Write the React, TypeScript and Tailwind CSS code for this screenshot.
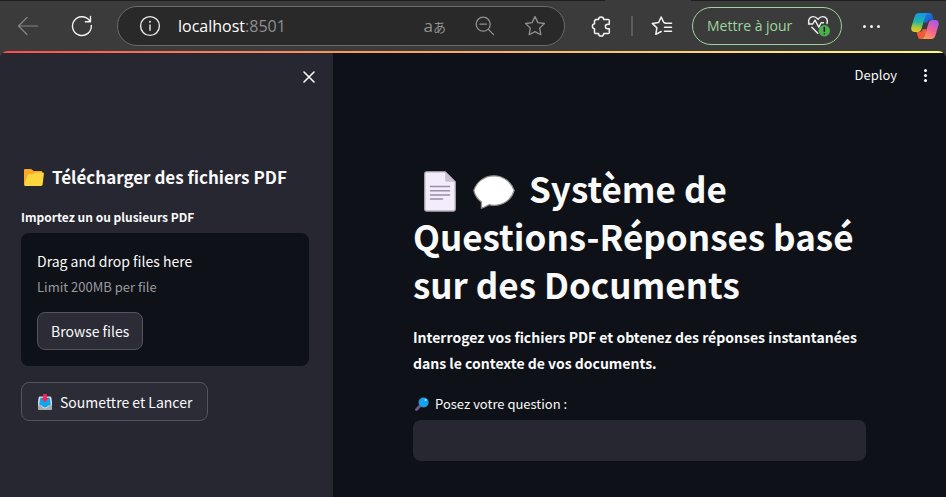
import React from "react";

const uiFont = "font-['Noto_Sans_CJK_JP','Noto_Sans_CJK_SC',sans-serif]";
const chromeFont = "font-['Open_Sans','Noto_Sans_CJK_JP',sans-serif]";

function BackIcon() {
  return (
    <svg width="22" height="20" viewBox="0 0 22 20" fill="none" stroke="#858585" strokeWidth="1.2" strokeLinecap="round" strokeLinejoin="round">
      <path d="M20.5 10H1.5M10 1.5L1.5 10l8.5 8.5" />
    </svg>
  );
}

function ReloadIcon() {
  return (
    <svg width="22" height="22" viewBox="0 0 22 22" fill="none" stroke="#f2f2f2" strokeWidth="1.4" strokeLinecap="round" strokeLinejoin="round">
      <path d="M20.3 10.5a9.4 9.4 0 1 1-2-5.2l1 1.2M19.5 1.5v5.2h-5.2" />
    </svg>
  );
}

function InfoIcon() {
  return (
    <svg width="22" height="22" viewBox="0 0 22 22" fill="none" stroke="#e8e8e8" strokeWidth="1.4">
      <circle cx="11" cy="11" r="9.4" />
      <path d="M11 9.6v6.2" />
      <circle cx="11" cy="6.8" r="1" fill="#e8e8e8" stroke="none" />
    </svg>
  );
}

function ZoomOutIcon() {
  return (
    <svg width="20" height="20" viewBox="0 0 20 20" fill="none" stroke="#929292" strokeWidth="1.3" strokeLinecap="round">
      <circle cx="8.2" cy="8.2" r="7" />
      <path d="M13.4 13.4l5.2 5.2M5 8.2h6.4" />
    </svg>
  );
}

function StarIcon() {
  return (
    <svg width="22" height="22" viewBox="0 0 22 22" fill="none" stroke="#929292" strokeWidth="1.3" strokeLinejoin="round">
      <path d="M11 1.6l2.9 6 6.5.9-4.7 4.6 1.1 6.6L11 16.6l-5.8 3.1 1.1-6.6L1.6 8.5l6.5-.9z" />
    </svg>
  );
}

function PuzzleIcon() {
  return (
    <svg width="20" height="22" viewBox="0 0 20 22" fill="none" stroke="#f2f2f2" strokeWidth="1.5" strokeLinejoin="round">
      <path d="M4.500 4.500h3a2.600 2.600 0 1 1 5.200 0h4.600a1 1 0 0 1 1 1v3.700h-1.600a2.300 2.300 0 0 0 0 4.600h1.600v3.700a1 1 0 0 1-1 1h-4.600a2.600 2.600 0 0 1-5.200 0h-3a1 1 0 0 1-1-1v-3.700a2.600 2.600 0 0 1 0-5.100v-2.700a1 1 0 0 1 1-1z" />
    </svg>
  );
}

function FavoritesIcon() {
  return (
    <svg width="22" height="22" viewBox="0 0 22 22" fill="none" stroke="#f2f2f2" strokeWidth="1.5" strokeLinecap="round" strokeLinejoin="round">
      <path d="M14 7.700L12.800 7.500 10.200 2 7.600 7.500l-6.300.9 4.600 4.500-1.100 6.400 5.400-2.800M14 8.200h6.500M13.500 12.200h7M13.500 16.200h7" />
    </svg>
  );
}

function HealthIcon() {
  return (
    <svg width="24" height="24" viewBox="0 0 24 24" fill="none" stroke="#f2f2f2" strokeWidth="1.4" strokeLinecap="round" strokeLinejoin="round">
      <path d="M2 9.500C.6 5.800 3 2.600 6.200 2.600c2 0 3.500 1 4.800 2.600 1.300-1.600 2.800-2.600 4.800-2.600 3.500 0 5.400 3.300 4.200 6.900" />
      <path d="M1.500 10h4.200l2.300-3.800 3.800 7 2.300-4.400h2.400M4.800 13.200l6 6" />
      <circle cx="17.300" cy="16.800" r="5.700" fill="#4caf50" stroke="none" />
      <path d="M17.300 13.500v3.800M17.300 19.700v.1" stroke="#222" strokeWidth="1.600" />
    </svg>
  );
}

function CopilotIcon() {
  return (
    <svg width="28" height="26" viewBox="0 0 28 26">
      <defs>
        <linearGradient id="cpLeft" x1="0.3" y1="0" x2="0.2" y2="1">
          <stop offset="0" stopColor="#1596e8" />
          <stop offset="0.45" stopColor="#24b6a0" />
          <stop offset="0.75" stopColor="#a8c93c" />
          <stop offset="1" stopColor="#f6c522" />
        </linearGradient>
        <linearGradient id="cpRight" x1="0.8" y1="0" x2="0.3" y2="1">
          <stop offset="0" stopColor="#9a5cf0" />
          <stop offset="0.5" stopColor="#f0609a" />
          <stop offset="1" stopColor="#ff9a50" />
        </linearGradient>
        <linearGradient id="cpTop" x1="0" y1="0" x2="1" y2="1">
          <stop offset="0" stopColor="#1a8be8" />
          <stop offset="1" stopColor="#1b4fc4" />
        </linearGradient>
      </defs>
      <path d="M10 0h8.500c1.700 0 2.400 1 2.900 2.600l1.300 4.400h-3c-2 0-3 1-3.500 2.500l-3 .5z" fill="url(#cpTop)" />
      <path d="M18 26H9.800c-1.800 0-2.500-1-3-2.600L5.500 19h2.700c2 0 3-1.200 3.500-2.700l3-.3z" fill="#ee5a3a" />
      <path d="M8 0h9c-1.700.6-2.300 1.800-2.900 3.800l-3.500 11.800c-.6 2-1.600 3.400-3.900 3.400H3.800C.8 19-.3 16.600.4 14L3.600 3.600C4.300 1.300 5.700 0 8 0z" fill="url(#cpLeft)" />
      <path d="M20 26h-9c1.700-.6 2.300-1.800 2.900-3.800l3.500-11.800c.6-2 1.600-3.400 3.900-3.400h2.900c3 0 4.100 2.400 3.400 5l-3.200 10.400c-.7 2.300-2.100 3.600-4.400 3.600z" fill="url(#cpRight)" />
    </svg>
  );
}

function FolderIcon() {
  return (
    <svg width="20" height="17" viewBox="0 0 20 17" className="shrink-0">
      <path d="M0 1.200C0 .5.500 0 1.200 0h5.300c.6 0 1 .2 1.400.6L9.500 2H17c.7 0 1.200.5 1.200 1.200V15.500H1.200C.5 15.500 0 15 0 14.300z" fill="#fba829" />
      <path d="M5 5.200h4L11 3.600h7.700c.8 0 1.300.6 1.200 1.400l-1.300 10.600c-.1.800-.7 1.400-1.500 1.400H1.400C.5 17 0 16.300.2 15.500L3.600 6.300C3.900 5.600 4.300 5.200 5 5.200z" fill="#fdd53f" />
    </svg>
  );
}

function InboxIcon() {
  return (
    <svg width="14" height="16" viewBox="0 0 14 16" className="shrink-0">
      <path d="M2.200 2.500h9.600c.8 0 1.400.4 1.600 1.200L14 8v6.600c0 .8-.6 1.400-1.400 1.400H1.400C.6 16 0 15.400 0 14.600V8l.6-4.300c.2-.8.800-1.200 1.600-1.200z" fill="#dcdee0" />
      <path d="M2.300 3.800h9.400l1 5.700v2H10c-.3 1.300-1.500 2-3 2s-2.700-.7-3-2H1.300v-2z" fill="#12a5ee" />
      <path d="M0 11.500h3.200c.6 1.900 2 2.800 3.800 2.800s3.200-.9 3.800-2.800H14v3.100c0 .8-.6 1.400-1.400 1.400H1.400C.6 16 0 15.400 0 14.600z" fill="#a9abad" />
      <path d="M5.200 0h3.600v4h2L7 8.200 3.200 4h2z" fill="#f8245f" />
    </svg>
  );
}

function PageIcon() {
  return (
    <svg width="32" height="41" viewBox="0 0 32 41" className="shrink-0">
      <path d="M2.500.8h18.700l10 10v27.500c0 1-.7 1.700-1.700 1.700h-27c-1 0-1.700-.7-1.700-1.700V2.500C.8 1.500 1.500.8 2.500.8z" fill="#f3ecfa" stroke="#b9acbe" strokeWidth="1.300" />
      <path d="M21.200 1l9.800 9.800h-8.300c-.9 0-1.500-.6-1.500-1.500z" fill="#cbbfd6" />
      <path d="M6.500 15.500h19M6.500 19.700h19M6.500 23.900h19M6.500 28.100h12" stroke="#9b8ba6" strokeWidth="1.500" strokeLinecap="round" />
    </svg>
  );
}

function BubbleIcon() {
  return (
    <svg width="42" height="34" viewBox="0 0 42 34" className="shrink-0">
      <path d="M21 .8C31.500.8 38.500 8 41.200 15.500 38.500 24.500 31 30.300 21 30.300c-2 0-3.500-.2-5-.6-2.300 1.300-4.500 2.600-7.600 3.500V27C4.500 24.200 2 20.500.8 15.500 3.500 7.500 10.500.8 21 .8z" fill="#fff" stroke="#8d8d8d" strokeWidth="1.200" />
    </svg>
  );
}

function SearchEmoji() {
  return (
    <svg width="14" height="14" viewBox="0 0 14 14" className="shrink-0">
      <path d="M1.500 12.500L5.200 8.800" stroke="#6a5a94" strokeWidth="2.800" strokeLinecap="round" />
      <circle cx="8.600" cy="5.400" r="5.200" fill="#4f6a90" />
      <circle cx="8.600" cy="5.400" r="4.500" fill="#0da6f2" />
      <circle cx="10.600" cy="3" r="1" fill="#c8ecff" />
    </svg>
  );
}

function BrowserBar() {
  return (
    <header className={`bg-[#3b3b3b] ${chromeFont}`}>
      <div className="flex h-px justify-between">
        <div className="w-[64%] bg-[#1e1e1e]" />
        <div className="w-[27%] bg-[#1e1e1e]" />
      </div>
      <div className="flex h-[50px] items-center pr-[7px] pl-[17px]">
        <button type="button" aria-label="Retour" className="shrink-0"><BackIcon /></button>
        <button type="button" aria-label="Actualiser" className="ml-8 shrink-0"><ReloadIcon /></button>
        <div className="ml-6 flex h-10 min-w-0 flex-1 items-center rounded-full border border-[#6a6a6a] bg-[#292929] pr-[18px] pl-[21px]">
          <button type="button" aria-label="Informations sur le site" className="shrink-0"><InfoIcon /></button>
          <div className="ml-[17px] flex-1 truncate text-base leading-6 text-white">
            localhost<span className="text-[#8f8f8f]">:8501</span>
          </div>
          <button type="button" aria-label="Traduire" className="flex items-baseline text-[#929292]">
            <span className="text-[17px] leading-5">a</span>
            <span className="text-[13px] leading-5">あ</span>
          </button>
          <button type="button" aria-label="Zoom arrière" className="ml-[29px] shrink-0"><ZoomOutIcon /></button>
          <button type="button" aria-label="Favori" className="ml-[29px] shrink-0"><StarIcon /></button>
        </div>
        <button type="button" aria-label="Extensions" className="ml-[26px] shrink-0"><PuzzleIcon /></button>
        <div className="ml-5 h-5 w-0.5 shrink-0 bg-[#5c5c5c]" />
        <button type="button" aria-label="Favoris" className="ml-[18px] shrink-0"><FavoritesIcon /></button>
        <button type="button" className="ml-[19px] flex h-[38px] w-[150px] shrink-0 items-center justify-between rounded-full border border-[#9ad69a] bg-[#3b3b3b] pr-2.5 pl-3.5 text-sm whitespace-nowrap text-[#9ad69a]">
          Mettre à jour
          <HealthIcon />
        </button>
        <button type="button" aria-label="Plus" className="ml-5 flex shrink-0 gap-1 px-px">
          <span className="size-[3px] rounded-full bg-[#f2f2f2]" />
          <span className="size-[3px] rounded-full bg-[#f2f2f2]" />
          <span className="size-[3px] rounded-full bg-[#f2f2f2]" />
        </button>
        <button type="button" aria-label="Copilot" className="ml-[30px] shrink-0"><CopilotIcon /></button>
      </div>
    </header>
  );
}

function Sidebar() {
  return (
    <aside className="w-[333px] shrink-0 bg-[#262730] pr-6 pl-[21px]">
      <div className="flex h-12 items-center justify-end">
        <button type="button" aria-label="Fermer" className="mr-[-6px]">
          <svg width="12" height="12" viewBox="0 0 12 12" stroke="#fafafa" strokeWidth="1.600" strokeLinecap="round">
            <path d="M1 1l10 10M11 1L1 11" />
          </svg>
        </button>
      </div>
      <h2 className="mt-16 flex h-6 items-center gap-2 pl-[3px] text-[17px] font-bold whitespace-nowrap">
        <FolderIcon />
        Télécharger des fichiers PDF
      </h2>
      <label htmlFor="pdf-files" className="mt-[18px] block text-xs leading-5 font-bold">Importez un ou plusieurs PDF</label>
      <div className="mt-1.5 rounded-lg bg-[#0e1117] p-4">
        <div className="text-sm leading-6">Drag and drop files here</div>
        <div className="mt-1 text-[13px] leading-5 text-[#9a9a9f]">Limit 200MB per file</div>
        <input id="pdf-files" type="file" multiple className="hidden" />
        <button type="button" className="mt-[15px] h-[38px] rounded-lg border border-[#53545c] bg-[#2b2c36] px-[13px] text-sm leading-5">Browse files</button>
      </div>
      <button type="button" className="mt-4 flex h-[39px] items-center gap-2 rounded-lg border border-[#53545c] bg-[#2b2c36] pr-[15px] pl-4 text-sm leading-5 whitespace-nowrap">
        <InboxIcon />
        Soumettre et Lancer
      </button>
    </aside>
  );
}

function Main() {
  return (
    <main className="min-w-0 flex-1 bg-[#0e1117]">
      <div className="flex h-11 items-center justify-end pr-[18px] text-[13px]">
        <button type="button">Deploy</button>
        <button type="button" aria-label="Menu" className="ml-[26px] flex flex-col gap-0.5 px-px">
          <span className="size-[3px] rounded-full bg-[#fafafa]" />
          <span className="size-[3px] rounded-full bg-[#fafafa]" />
          <span className="size-[3px] rounded-full bg-[#fafafa]" />
        </button>
      </div>
      <div className="px-20 pt-[67px] pb-8">
        <h1 className="text-[35px] leading-[48px] font-bold">
          <span className="mr-3.5 ml-[11px] inline-flex h-8 items-center gap-[17px] pb-1 align-middle">
            <PageIcon />
            <BubbleIcon />
          </span>
          Système de Questions-Réponses basé sur des Documents
        </h1>
        <p className="mt-4 text-sm leading-[26px] font-bold">
          Interrogez vos fichiers PDF et obtenez des réponses instantanées dans le contexte de vos documents.
        </p>
        <label htmlFor="question" className="mt-[18px] flex h-5 items-center gap-1.5 pl-0.5 text-[13px]">
          <SearchEmoji />
          Posez votre question :
        </label>
        <input id="question" type="text" className="mt-1.5 block h-[41px] w-full rounded-lg bg-[#262730] px-3 text-sm outline-none" />
      </div>
    </main>
  );
}

export default function App() {
  return (
    <div className={`flex min-h-screen flex-col bg-[#3b3b3b] text-[#fafafa] ${uiFont}`}>
      <BrowserBar />
      <div className="flex flex-1 flex-col overflow-hidden rounded-t-lg">
        <div className="h-0.5 bg-linear-to-r from-[#ff4b4b] to-[#fffd80]" />
        <div className="flex flex-1">
          <Sidebar />
          <Main />
        </div>
      </div>
    </div>
  );
}
